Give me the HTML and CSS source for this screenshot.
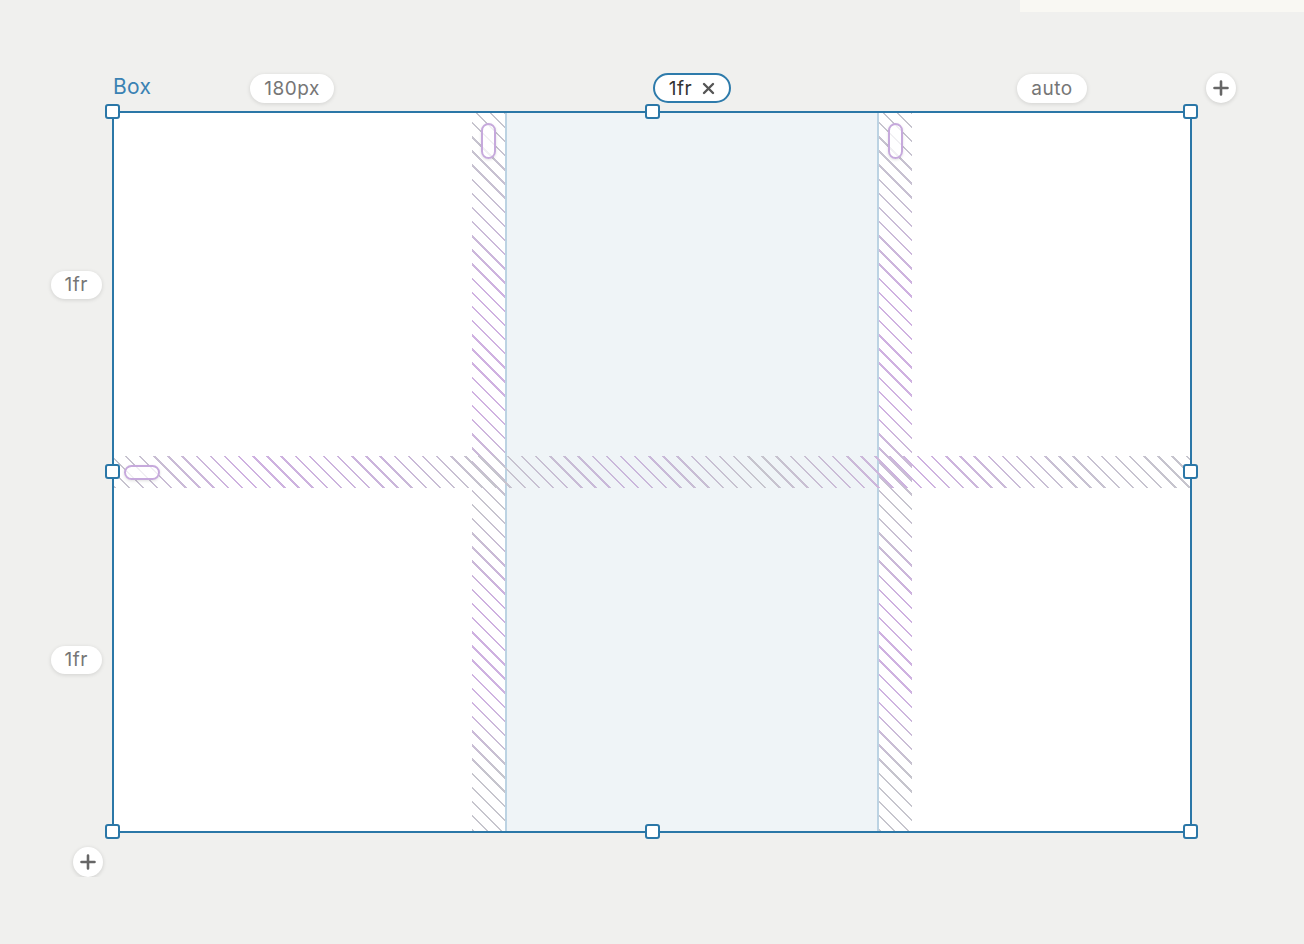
FILE: index.html
```html
<!DOCTYPE html>
<html>
<head>
    <title>Grid editor</title>
    <meta charset="utf-8">
    <link rel="stylesheet" href="styles.css">
</head>
<body>
    <div class="topbar"><div class="note"></div></div>

    <div class="editor">
        <div class="colhead">
            <span class="box-name">Box</span>
            <span class="pill c1">180px</span>
            <span class="pill pill-active c3">1fr
                <svg width="13" height="13" viewBox="0 0 13 13"><path d="M2 2L11 11M11 2L2 11" stroke="#555" stroke-width="2.4" stroke-linecap="round"/></svg>
            </span>
            <span class="pill c5">auto</span>
            <span class="add c7">
                <svg width="16" height="16" viewBox="0 0 16 16"><path d="M8 1.5V14.5M1.5 8H14.5" stroke="#666" stroke-width="2.6" stroke-linecap="round"/></svg>
            </span>
        </div>

        <div class="rowhead">
            <span class="pill r1">1fr</span>
            <span class="pill r3">1fr</span>
        </div>

        <div class="box">
            <div class="track-active"></div>
            <div class="gap gap-col g1"><span class="grip grip-v"></span></div>
            <div class="gap gap-col g2"><span class="grip grip-v"></span></div>
            <div class="gap gap-row"><span class="grip grip-h"></span></div>

            <i class="handle h-tl"></i>
            <i class="handle h-tc"></i>
            <i class="handle h-tr"></i>
            <i class="handle h-ml"></i>
            <i class="handle h-mr"></i>
            <i class="handle h-bl"></i>
            <i class="handle h-bc"></i>
            <i class="handle h-br"></i>
        </div>

        <div class="foot">
            <span class="add">
                <svg width="16" height="16" viewBox="0 0 16 16"><path d="M8 1.5V14.5M1.5 8H14.5" stroke="#666" stroke-width="2.6" stroke-linecap="round"/></svg>
            </span>
        </div>
    </div>
</body>
</html>
```

FILE: styles.css
```css
body{margin:0;background-color:#f0f0ee;font-family:Inter, "Noto Sans", sans-serif;}

.topbar{height:12px;display:flex;justify-content:flex-end;}
.note{width:284px;background-color:#f9f8f3;}

.editor{display:grid;grid-template-columns:112px 1080px 1fr;grid-template-rows:99px 722px auto;}

/* column labels */
.colhead{
    grid-column:2 / 4;grid-row:1;
    display:grid;grid-template-columns:360px 33px 374px 33px 280px 14px 30px;
    align-items:end;padding-bottom:8px;
}
.box-name{grid-column:1;grid-row:1;justify-self:start;margin:0 0 1px 1px;line-height:30px;font-size:21px;letter-spacing:0.3px;color:#3a82b3;}
.c1{grid-column:1;grid-row:1;}
.c3{grid-column:3;grid-row:1;}
.c5{grid-column:5;grid-row:1;}
.c7{grid-column:7;grid-row:1;}

.pill{
    justify-self:center;display:inline-flex;align-items:center;gap:10px;
    height:29px;padding:0 14px;box-sizing:border-box;border-radius:15px;
    background-color:#fff;box-shadow:0 1px 4px rgba(0,0,0,0.13);
    font-size:19px;letter-spacing:0.5px;color:#767676;
}
.pill-active{height:30px;border:2px solid #2e7bab;padding:0 14px;color:#333;box-shadow:none;}

.add{
    justify-self:center;display:flex;align-items:center;justify-content:center;
    width:30px;height:30px;border-radius:50%;background-color:#fff;
    box-shadow:0 1px 4px rgba(0,0,0,0.15);
}

/* row labels */
.rowhead{grid-column:1;grid-row:2;display:grid;grid-template-rows:343px 32px 343px;padding:2px 0;}
.rowhead .pill{justify-self:end;align-self:center;margin-right:10px;height:28px;padding:0 14px;}
.r1{grid-row:1;}
.r3{grid-row:3;}

.foot{grid-column:1;grid-row:3;display:flex;justify-content:flex-end;padding:14px 9px 0 0;}

/* the grid box */
.box{
    grid-column:2;grid-row:2;position:relative;
    border:2px solid #2b77a7;background-color:#fff;
    display:grid;grid-template-columns:358px 33px 374px 33px 278px;grid-template-rows:343px 32px 343px;
}
.track-active{grid-column:3;grid-row:1 / -1;background-color:#eff4f7;border-left:2px solid #bcd3e3;border-right:2px solid #bcd3e3;}

.gap{position:relative;display:flex;}
.gap::before{
    content:"";position:absolute;top:0;left:0;right:0;bottom:0;
    -webkit-mask-image:repeating-linear-gradient(45deg, #000 0 1.7px, transparent 1.7px 10px);
    mask-image:repeating-linear-gradient(45deg, #000 0 1.7px, transparent 1.7px 10px);
}
.gap-col{grid-row:1 / -1;justify-content:center;align-items:flex-start;padding-top:10px;}
.gap-col::before{background:linear-gradient(to bottom, #c6c5cd 0%, #c8c0d3 12%, #cfb1e1 25%, #d0b2e1 42%, #c6c5cd 55%, #ceb0e0 68%, #cfb3e1 82%, #c6c5cd 92%);}
.g1{grid-column:2;}
.g2{grid-column:4;}
.gap-row{grid-column:1 / -1;grid-row:2;align-items:center;padding-left:10px;}
.gap-row::before{background:linear-gradient(to right, #c6c5cd 0%, #cfb1e1 12%, #cbb5dc 25%, #c6c5cd 35%, #cab6dc 48%, #c6c5cd 60%, #cfb1e1 75%, #c8c1d3 88%, #c6c5cd 100%);}

.grip{
    position:relative;box-sizing:border-box;border:2px solid #c6a9dc;border-radius:8px;
    background-color:rgba(255,255,255,0.75);box-shadow:0 1px 3px rgba(0,0,0,0.12);
}
.grip-v{width:15px;height:36px;}
.grip-h{width:36px;height:15px;}

/* resize handles over the border */
.handle{
    position:absolute;width:15px;height:15px;box-sizing:border-box;
    border:2px solid #2b77a7;border-radius:3px;background-color:#fff;
}
.h-tl{left:-9px;top:-9px;}
.h-tc{left:calc(50% - 7.5px);top:-9px;}
.h-tr{right:-8px;top:-9px;}
.h-ml{left:-9px;top:calc(50% - 8px);}
.h-mr{right:-8px;top:calc(50% - 8px);}
.h-bl{left:-9px;bottom:-8px;}
.h-bc{left:calc(50% - 7.5px);bottom:-8px;}
.h-br{right:-8px;bottom:-8px;}
```
